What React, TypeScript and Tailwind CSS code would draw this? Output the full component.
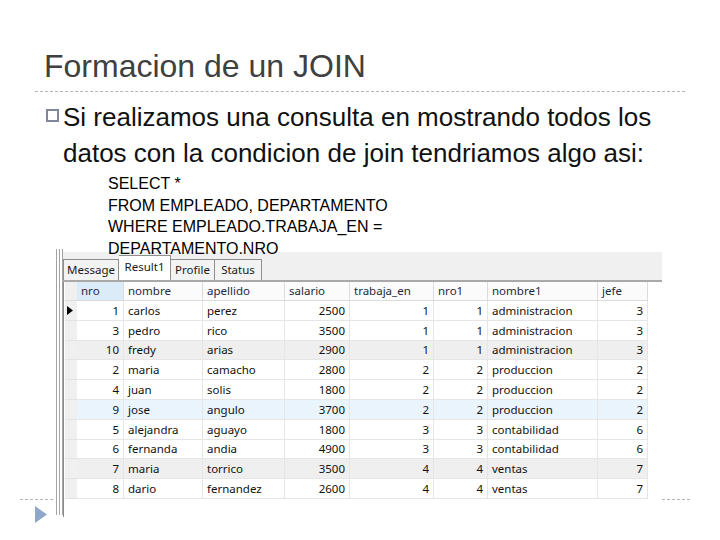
import React from "react";

const rows: [string, string, string, string, string, string, string, string][] = [
  ["1", "carlos", "perez", "2500", "1", "1", "administracion", "3"],
  ["3", "pedro", "rico", "3500", "1", "1", "administracion", "3"],
  ["10", "fredy", "arias", "2900", "1", "1", "administracion", "3"],
  ["2", "maria", "camacho", "2800", "2", "2", "produccion", "2"],
  ["4", "juan", "solis", "1800", "2", "2", "produccion", "2"],
  ["9", "jose", "angulo", "3700", "2", "2", "produccion", "2"],
  ["5", "alejandra", "aguayo", "1800", "3", "3", "contabilidad", "6"],
  ["6", "fernanda", "andia", "4900", "3", "3", "contabilidad", "6"],
  ["7", "maria", "torrico", "3500", "4", "4", "ventas", "7"],
  ["8", "dario", "fernandez", "2600", "4", "4", "ventas", "7"],
];

const headers = ["nro", "nombre", "apellido", "salario", "trabaja_en", "nro1", "nombre1", "jefe"];
const rightAligned = [true, false, false, true, true, true, false, true];

function rowBg(i: number) {
  if (i === 2 || i === 8) return "bg-[#efefef]";
  if (i === 5) return "bg-[#eaf4fd]";
  return "bg-white";
}

export default function App() {
  return (
    <div className="relative w-[720px] h-[540px] bg-white overflow-hidden font-['Liberation_Sans',Arial,sans-serif]">
      {/* footer decorations behind the screenshot */}
      <div className="absolute left-[20px] top-[499px] w-[670px] border-t border-dashed border-[#b5b5b5]" />
      <svg className="absolute left-[35px] top-[506px]" width="12" height="17" viewBox="0 0 12 17">
        <polygon points="0,0 12,8.5 0,17" fill="#8fa7c9" />
      </svg>

      <div className="relative flex flex-col">
        <div className="pt-[50px] pl-[44px] text-[32px] leading-[32px] text-[#404040]">
          Formacion de un JOIN
        </div>
        <div className="mt-[9px] ml-[35px] w-[650px] border-t border-dashed border-[#b5b5b5]" />

        <div className="mt-[7px] flex pl-[46px]">
          <div className="mt-[10px] w-[13px] h-[13px] border-2 border-[#80879a] shrink-0" />
          <div className="ml-[4px] text-[26px] leading-[36px] text-[#111]">
            Si realizamos una consulta en mostrando todos los
            <br />
            datos con la condicion de join tendriamos algo asi:
          </div>
        </div>

        <div className="relative z-10 h-[78px] pt-[2px] pl-[108px] text-[16px] leading-[21.7px] text-black">
          SELECT *
          <br />
          FROM EMPLEADO, DEPARTAMENTO
          <br />
          WHERE EMPLEADO.TRABAJA_EN =
          <br />
          DEPARTAMENTO.NRO
        </div>

        {/* screenshot of query result */}
        <div className="relative z-[1] ml-[55px] w-[607px] h-[268px] bg-white flex font-['Noto_Sans',sans-serif]">
          <div className="ml-[1px] w-[1px] h-[266px] bg-[#a3a3a3]" />
          <div className="ml-[2px] w-[1px] h-[266px] bg-[#a3a3a3]" />
          <div className="ml-[2px] w-[1px] h-[266px] bg-[#a3a3a3]" />
          <div className="flex-1 flex flex-col">
            <div className="mt-[3px] h-[30px] bg-[#f0f0f0] border-b-2 border-[#a9a9a9] flex items-end text-[11.5px] text-[#1a1a1a]">
              <div className="w-[56px] h-[21px] border border-b-0 border-[#8e8e8e] bg-[#f3f3f3] flex items-center justify-center">
                Message
              </div>
              <div className="w-[52px] h-[25px] border-t border-r border-[#8e8e8e] bg-white flex items-center justify-center pb-[3px]">
                Result1
              </div>
              <div className="w-[44px] h-[21px] border-t border-r border-[#8e8e8e] bg-[#f3f3f3] flex items-center justify-center">
                Profile
              </div>
              <div className="w-[47px] h-[21px] border-t border-r border-[#8e8e8e] bg-[#f3f3f3] flex items-center justify-center">
                Status
              </div>
            </div>
            <div className="flex-1 border-l border-[#8c8c8c] pl-[1px] text-[11.5px]">
              <div className="grid grid-cols-[12px_47px_79px_82px_65px_84px_54px_110px_50px] w-[583px]">
                <div className="h-[19px] bg-[#f0f0f0] border-b border-[#dedede]" />
                {headers.map((h, i) => (
                  <div
                    key={h}
                    className={
                      "h-[19px] flex items-center pl-[4px] border-b border-r border-[#dcdcdc] text-[#1e2a44] " +
                      (i === 0 ? "bg-[#dcebf8]" : "bg-[#fbfbfb]")
                    }
                  >
                    {h}
                  </div>
                ))}
                {rows.map((r, ri) => (
                  <React.Fragment key={ri}>
                    <div className="h-[19.8px] bg-[#f0f0f0] border-b border-[#e2e2e2] flex items-center pl-[2px]">
                      {ri === 0 && (
                        <svg width="6" height="9" viewBox="0 0 6 9">
                          <polygon points="0,0 6,4.5 0,9" fill="#000" />
                        </svg>
                      )}
                    </div>
                    {r.map((c, ci) => (
                      <div
                        key={ci}
                        className={
                          "h-[19.8px] flex items-center border-b border-r border-[#e6e6e6] text-[#111] " +
                          rowBg(ri) +
                          (rightAligned[ci] ? " justify-end pr-[4px]" : " pl-[4px]")
                        }
                      >
                        {c}
                      </div>
                    ))}
                  </React.Fragment>
                ))}
              </div>
            </div>
          </div>
        </div>
      </div>
    </div>
  );
}
